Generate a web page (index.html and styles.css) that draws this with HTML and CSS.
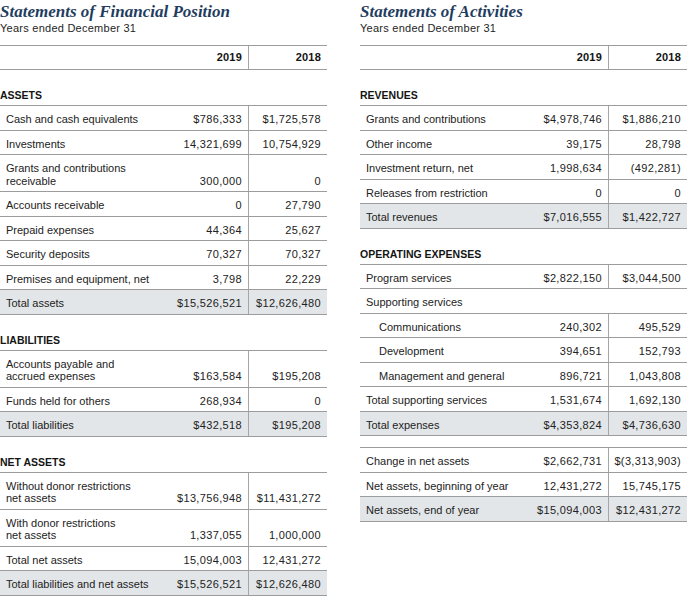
FILE: index.html
```html
<!DOCTYPE html>
<html lang="en">
<head>
<meta charset="utf-8">
<title>Financial Statements</title>
<link rel="stylesheet" href="styles.css">
</head>
<body>
<div class="page">
  <section class="statement">
    <h1 class="title">Statements of Financial Position</h1>
    <p class="subtitle">Years ended December 31</p>
    <div class="table">
      <div class="row head"><div class="label"></div><div class="v1">2019</div><div class="v2">2018</div></div>
      <div class="section">ASSETS</div>
      <div class="row"><div class="label">Cash and cash equivalents</div><div class="v1">$786,333</div><div class="v2">$1,725,578</div></div>
      <div class="row"><div class="label">Investments</div><div class="v1">14,321,699</div><div class="v2">10,754,929</div></div>
      <div class="row"><div class="label">Grants and contributions<br>receivable</div><div class="v1">300,000</div><div class="v2">0</div></div>
      <div class="row"><div class="label">Accounts receivable</div><div class="v1">0</div><div class="v2">27,790</div></div>
      <div class="row"><div class="label">Prepaid expenses</div><div class="v1">44,364</div><div class="v2">25,627</div></div>
      <div class="row"><div class="label">Security deposits</div><div class="v1">70,327</div><div class="v2">70,327</div></div>
      <div class="row"><div class="label">Premises and equipment, net</div><div class="v1">3,798</div><div class="v2">22,229</div></div>
      <div class="row total"><div class="label">Total assets</div><div class="v1">$15,526,521</div><div class="v2">$12,626,480</div></div>
      <div class="section">LIABILITIES</div>
      <div class="row"><div class="label">Accounts payable and<br>accrued expenses</div><div class="v1">$163,584</div><div class="v2">$195,208</div></div>
      <div class="row"><div class="label">Funds held for others</div><div class="v1">268,934</div><div class="v2">0</div></div>
      <div class="row total"><div class="label">Total liabilities</div><div class="v1">$432,518</div><div class="v2">$195,208</div></div>
      <div class="section">NET ASSETS</div>
      <div class="row"><div class="label">Without donor restrictions<br>net assets</div><div class="v1">$13,756,948</div><div class="v2">$11,431,272</div></div>
      <div class="row"><div class="label">With donor restrictions<br>net assets</div><div class="v1">1,337,055</div><div class="v2">1,000,000</div></div>
      <div class="row"><div class="label">Total net assets</div><div class="v1">15,094,003</div><div class="v2">12,431,272</div></div>
      <div class="row total"><div class="label">Total liabilities and net assets</div><div class="v1">$15,526,521</div><div class="v2">$12,626,480</div></div>
    </div>
  </section>
  <section class="statement">
    <h1 class="title">Statements of Activities</h1>
    <p class="subtitle">Years ended December 31</p>
    <div class="table">
      <div class="row head"><div class="label"></div><div class="v1">2019</div><div class="v2">2018</div></div>
      <div class="section">REVENUES</div>
      <div class="row"><div class="label">Grants and contributions</div><div class="v1">$4,978,746</div><div class="v2">$1,886,210</div></div>
      <div class="row"><div class="label">Other income</div><div class="v1">39,175</div><div class="v2">28,798</div></div>
      <div class="row"><div class="label">Investment return, net</div><div class="v1">1,998,634</div><div class="v2">(492,281)</div></div>
      <div class="row"><div class="label">Releases from restriction</div><div class="v1">0</div><div class="v2">0</div></div>
      <div class="row total"><div class="label">Total revenues</div><div class="v1">$7,016,555</div><div class="v2">$1,422,727</div></div>
      <div class="section">OPERATING EXPENSES</div>
      <div class="row"><div class="label">Program services</div><div class="v1">$2,822,150</div><div class="v2">$3,044,500</div></div>
      <div class="row"><div class="label">Supporting services</div></div>
      <div class="row"><div class="label indent">Communications</div><div class="v1">240,302</div><div class="v2">495,529</div></div>
      <div class="row"><div class="label indent">Development</div><div class="v1">394,651</div><div class="v2">152,793</div></div>
      <div class="row"><div class="label indent">Management and general</div><div class="v1">896,721</div><div class="v2">1,043,808</div></div>
      <div class="row"><div class="label">Total supporting services</div><div class="v1">1,531,674</div><div class="v2">1,692,130</div></div>
      <div class="row total"><div class="label">Total expenses</div><div class="v1">$4,353,824</div><div class="v2">$4,736,630</div></div>
      <div class="spacer"></div>
      <div class="row"><div class="label">Change in net assets</div><div class="v1">$2,662,731</div><div class="v2">$(3,313,903)</div></div>
      <div class="row"><div class="label">Net assets, beginning of year</div><div class="v1">12,431,272</div><div class="v2">15,745,175</div></div>
      <div class="row total"><div class="label">Net assets, end of year</div><div class="v1">$15,094,003</div><div class="v2">$12,431,272</div></div>
    </div>
  </section>
</div>
</body>
</html>
```

FILE: styles.css
```css
* { box-sizing: border-box; }
html, body { margin: 0; padding: 0; background: #ffffff; }
body {
  font-family: "Liberation Sans", Arial, sans-serif;
  color: #222222;
}
.page {
  display: grid;
  grid-template-columns: 327px 327px;
  column-gap: 33px;
  width: 687px;
}
.title {
  margin: 0;
  padding-top: 1px;
  font-family: "Liberation Serif", "Times New Roman", serif;
  font-style: italic;
  font-weight: bold;
  font-size: 17px;
  line-height: 21px;
  color: #1f3d5f;
}
.subtitle {
  margin: 0;
  font-size: 11px;
  line-height: 13px;
  letter-spacing: 0.25px;
  color: #1e1e1e;
}
.table {
  margin-top: 10px;
  border-top: 1px solid #9c9c9c;
}
.row {
  display: flex;
  align-items: stretch;
  border-bottom: 1px solid #9c9c9c;
  font-size: 11px;
  line-height: 12.5px;
}
.row > div {
  padding: 7px 6px 4px 6px;
}
.label {
  flex: 1;
}
.label.indent { padding-left: 19px !important; }
.v1, .v2 {
  display: flex;
  align-items: flex-end;
  justify-content: flex-end;
  letter-spacing: 0.35px;
  white-space: nowrap;
}
.v2 {
  width: 79px;
  flex: none;
  border-left: 1px solid #a6a6a6;
}
.row.head > div {
  padding-top: 5px;
  padding-bottom: 5px;
  line-height: 13px;
  font-weight: bold;
  color: #141414;
}
.row.head .v1, .row.head .v2 { letter-spacing: 0.2px; }
.row.total { background: #e2e6e9; }
.section {
  padding: 19px 0 4px 0;
  font-size: 10.5px;
  line-height: 12px;
  font-weight: bold;
  color: #141414;
  border-bottom: 1px solid #9c9c9c;
}
.spacer {
  height: 12px;
  border-bottom: 1px solid #9c9c9c;
}
```
